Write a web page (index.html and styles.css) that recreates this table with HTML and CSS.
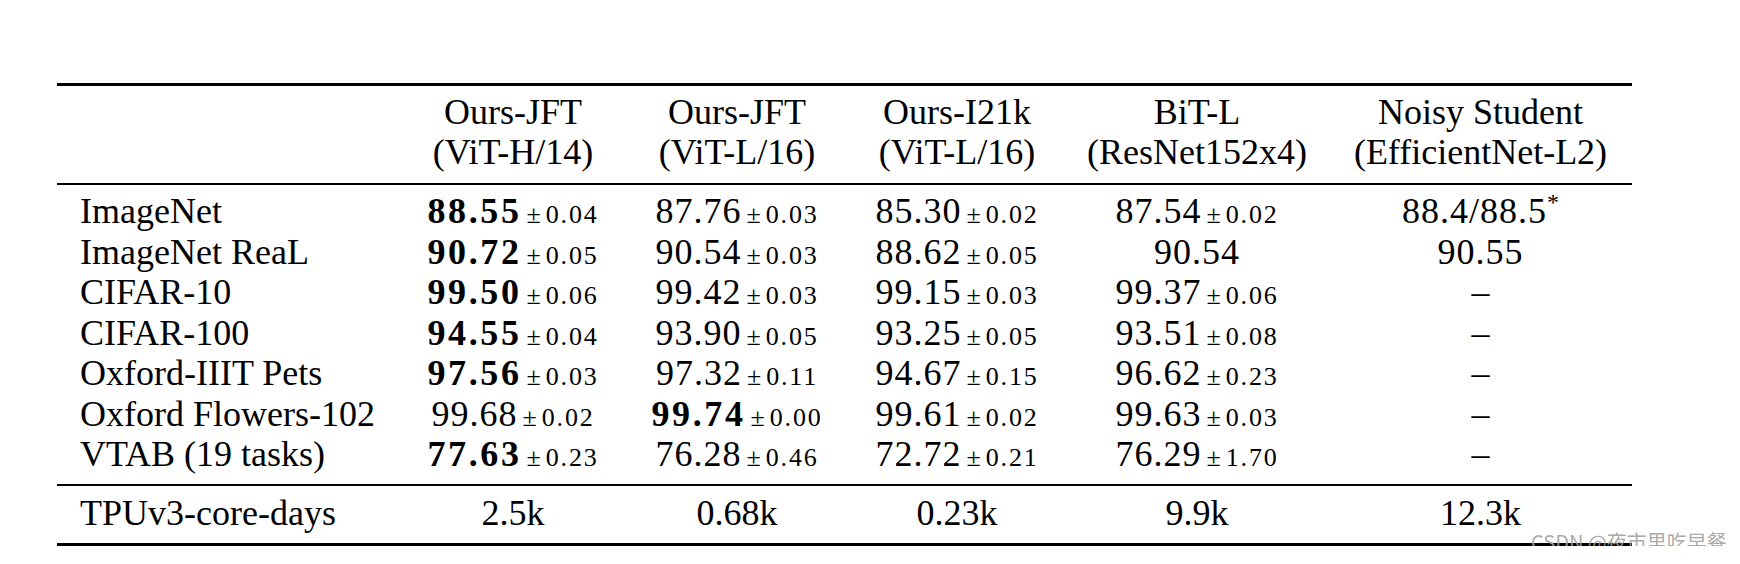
FILE: index.html
```html
<!DOCTYPE html>
<html lang="en">
<head>
<meta charset="utf-8">
<title>Comparison table</title>
<link rel="stylesheet" href="styles.css">
</head>
<body>
<div class="page">
  <div class="table">
    <div class="group head">
      <div class="row">
        <div class="label"></div>
        <div class="cell">Ours-JFT<br>(ViT-H/14)</div>
        <div class="cell">Ours-JFT<br>(ViT-L/16)</div>
        <div class="cell">Ours-I21k<br>(ViT-L/16)</div>
        <div class="cell">BiT-L<br>(ResNet152x4)</div>
        <div class="cell">Noisy Student<br>(EfficientNet-L2)</div>
      </div>
    </div>
    <div class="group body">
      <div class="row">
        <div class="label">ImageNet</div>
        <div class="cell"><b class="num">88.55</b><span class="pm">±</span><span class="sd">0.04</span></div>
        <div class="cell"><span class="num">87.76</span><span class="pm">±</span><span class="sd">0.03</span></div>
        <div class="cell"><span class="num">85.30</span><span class="pm">±</span><span class="sd">0.02</span></div>
        <div class="cell"><span class="num">87.54</span><span class="pm">±</span><span class="sd">0.02</span></div>
        <div class="cell"><span class="num">88.4/88.5</span><sup class="star">*</sup></div>
      </div>
      <div class="row">
        <div class="label">ImageNet ReaL</div>
        <div class="cell"><b class="num">90.72</b><span class="pm">±</span><span class="sd">0.05</span></div>
        <div class="cell"><span class="num">90.54</span><span class="pm">±</span><span class="sd">0.03</span></div>
        <div class="cell"><span class="num">88.62</span><span class="pm">±</span><span class="sd">0.05</span></div>
        <div class="cell"><span class="num">90.54</span></div>
        <div class="cell"><span class="num">90.55</span></div>
      </div>
      <div class="row">
        <div class="label">CIFAR-10</div>
        <div class="cell"><b class="num">99.50</b><span class="pm">±</span><span class="sd">0.06</span></div>
        <div class="cell"><span class="num">99.42</span><span class="pm">±</span><span class="sd">0.03</span></div>
        <div class="cell"><span class="num">99.15</span><span class="pm">±</span><span class="sd">0.03</span></div>
        <div class="cell"><span class="num">99.37</span><span class="pm">±</span><span class="sd">0.06</span></div>
        <div class="cell">–</div>
      </div>
      <div class="row">
        <div class="label">CIFAR-100</div>
        <div class="cell"><b class="num">94.55</b><span class="pm">±</span><span class="sd">0.04</span></div>
        <div class="cell"><span class="num">93.90</span><span class="pm">±</span><span class="sd">0.05</span></div>
        <div class="cell"><span class="num">93.25</span><span class="pm">±</span><span class="sd">0.05</span></div>
        <div class="cell"><span class="num">93.51</span><span class="pm">±</span><span class="sd">0.08</span></div>
        <div class="cell">–</div>
      </div>
      <div class="row">
        <div class="label">Oxford-IIIT Pets</div>
        <div class="cell"><b class="num">97.56</b><span class="pm">±</span><span class="sd">0.03</span></div>
        <div class="cell"><span class="num">97.32</span><span class="pm">±</span><span class="sd">0.11</span></div>
        <div class="cell"><span class="num">94.67</span><span class="pm">±</span><span class="sd">0.15</span></div>
        <div class="cell"><span class="num">96.62</span><span class="pm">±</span><span class="sd">0.23</span></div>
        <div class="cell">–</div>
      </div>
      <div class="row">
        <div class="label">Oxford Flowers-102</div>
        <div class="cell"><span class="num">99.68</span><span class="pm">±</span><span class="sd">0.02</span></div>
        <div class="cell"><b class="num">99.74</b><span class="pm">±</span><span class="sd">0.00</span></div>
        <div class="cell"><span class="num">99.61</span><span class="pm">±</span><span class="sd">0.02</span></div>
        <div class="cell"><span class="num">99.63</span><span class="pm">±</span><span class="sd">0.03</span></div>
        <div class="cell">–</div>
      </div>
      <div class="row">
        <div class="label">VTAB (19 tasks)</div>
        <div class="cell"><b class="num">77.63</b><span class="pm">±</span><span class="sd">0.23</span></div>
        <div class="cell"><span class="num">76.28</span><span class="pm">±</span><span class="sd">0.46</span></div>
        <div class="cell"><span class="num">72.72</span><span class="pm">±</span><span class="sd">0.21</span></div>
        <div class="cell"><span class="num">76.29</span><span class="pm">±</span><span class="sd">1.70</span></div>
        <div class="cell">–</div>
      </div>
    </div>
    <div class="group foot">
      <div class="row">
        <div class="label">TPUv3-core-days</div>
        <div class="cell">2.5k</div>
        <div class="cell">0.68k</div>
        <div class="cell">0.23k</div>
        <div class="cell">9.9k</div>
        <div class="cell">12.3k</div>
      </div>
    </div>
    <div class="watermark">CSDN @夜市里吃早餐</div>
  </div>
</div>
</body>
</html>
```

FILE: styles.css
```css
html, body {
  margin: 0;
  padding: 0;
  background: #ffffff;
}

.page {
  padding: 83px 0 0 57px;
}

.table {
  position: relative;
  width: 1575px;
  border-top: 3px solid #000;
  border-bottom: 3px solid #000;
  font-family: "Liberation Serif", "Times New Roman", serif;
  font-size: 36px;
  color: #000;
}

.row {
  display: grid;
  grid-template-columns: 344px 224px 224px 216px 264px 1fr;
  align-items: center;
}

.label {
  padding-left: 23px;
  white-space: nowrap;
}

.cell {
  text-align: center;
  white-space: nowrap;
}

.head {
  padding: 6px 0 11px;
  border-bottom: 2px solid #000;
  line-height: 40px;
}

.body {
  padding: 6px 0 9.5px;
  border-bottom: 2px solid #000;
}

.body .row {
  height: 40.5px;
  line-height: 40.5px;
}

.foot {
  padding: 7px 0 10px;
}

.foot .row {
  height: 40px;
  line-height: 40px;
}

.num {
  letter-spacing: 1px;
}

b.num {
  font-weight: 700;
  letter-spacing: 2.6px;
}

.pm {
  font-size: 26px;
  line-height: 1;
  margin-left: 5px;
  margin-right: 5px;
}

.sd {
  font-size: 26px;
  line-height: 1;
  letter-spacing: 1.8px;
}

.star {
  font-size: 24px;
  line-height: 0;
  vertical-align: 13px;
}

.watermark {
  position: absolute;
  left: 1474px;
  top: 100%;
  margin-top: -9px;
  font-family: "Noto Sans CJK SC", "Noto Sans", sans-serif;
  font-size: 20px;
  line-height: 16px;
  color: rgba(160, 160, 160, 0.9);
  white-space: nowrap;
}
```
